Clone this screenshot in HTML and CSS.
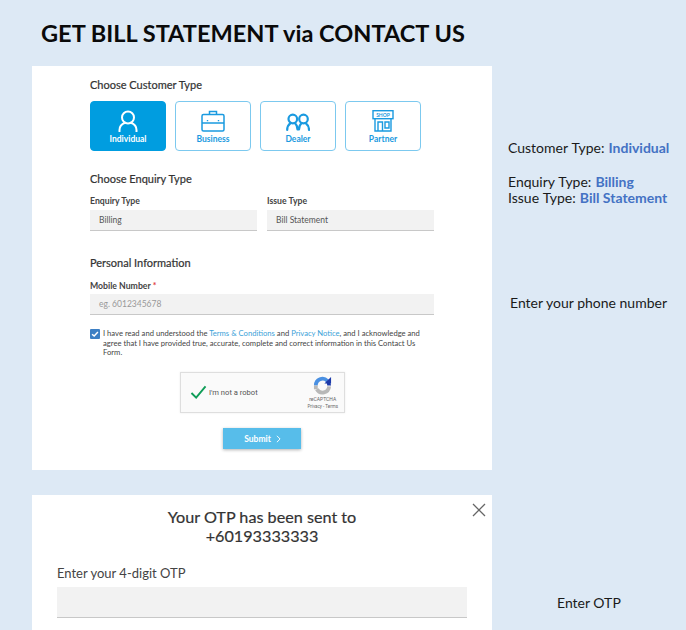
FILE: index.html
```
<!DOCTYPE html>
<html lang="en">
<head>
<meta charset="utf-8">
<title>Get Bill Statement via Contact Us</title>
<link rel="stylesheet" href="styles.css">
</head>
<body>
<h1 class="page-title">GET BILL STATEMENT via CONTACT US</h1>
<div class="layout">
  <div class="cards">
    <section class="card form-card">
      <h2 class="section-title">Choose Customer Type</h2>
      <div class="tiles">
        <div class="tile tile-active">
          <svg class="tile-icon" viewBox="0 0 24 22" fill="none" stroke="currentColor" stroke-width="2"><circle cx="12" cy="7.500" r="6"/><path d="M3.500 21.500v-1.500c0-3.500 2.500-6 5.500-7.200M20.500 21.500v-1.500c0-3.500-2.500-6-5.500-7.200" stroke-linecap="round"/></svg>
          <span>Individual</span>
        </div>
        <div class="tile">
          <svg class="tile-icon" viewBox="0 0 24 22" fill="none" stroke="currentColor" stroke-width="1.500"><rect x="1" y="4.500" width="22" height="16.500" rx="1.500"/><path d="M8.500 4.500V1.500h7v3M1 13h22"/><path d="M6.500 10v1.200M17.500 10v1.200" stroke-width="1.400"/></svg>
          <span>Business</span>
        </div>
        <div class="tile">
          <svg class="tile-icon" viewBox="0 0 24 22" fill="none" stroke="currentColor" stroke-width="2.200"><circle cx="6.800" cy="9" r="4.300"/><circle cx="17.500" cy="9" r="4.300"/><path d="M1.200 20c0-3.200 1.200-5.200 3.300-6.800M11.500 19.500c0-2.600-.8-4.800-2.500-6.300M13 19.500c0-2.600.8-4.800 2.500-6.300M23 20c0-3.200-1.200-5.200-3.300-6.800" stroke-linecap="round"/></svg>
          <span>Dealer</span>
        </div>
        <div class="tile">
          <svg class="tile-icon" viewBox="0 0 24 22" fill="none" stroke="currentColor" stroke-width="1.400"><rect x="2" y=".7" width="20" height="8"/><path d="M4 8.700V21h16V8.700M7 21V12h4.500v9M14 12h4v6h-4z"/><text class="shop-text" x="12" y="6.800" text-anchor="middle">SHOP</text></svg>
          <span>Partner</span>
        </div>
      </div>

      <h2 class="section-title enquiry-title">Choose Enquiry Type</h2>
      <div class="field-row">
        <div class="field">
          <label class="field-label">Enquiry Type</label>
          <div class="input">Billing</div>
        </div>
        <div class="field">
          <label class="field-label">Issue Type</label>
          <div class="input">Bill Statement</div>
        </div>
      </div>

      <h2 class="section-title personal-title">Personal Information</h2>
      <label class="field-label mobile-label">Mobile Number <span class="required">*</span></label>
      <div class="input input-placeholder">eg. 6012345678</div>

      <div class="consent">
        <span class="checkbox">
          <svg viewBox="0 0 12 12" fill="none" stroke="#fff" stroke-width="1.700"><path d="M2.500 6.200 5 8.500l4.500-5"/></svg>
        </span>
        <p>I have read and understood the <a>Terms &amp; Conditions</a> and <a>Privacy Notice</a>, and I acknowledge and agree that I have provided true, accurate, complete and correct information in this Contact Us Form.</p>
      </div>

      <div class="captcha">
        <svg class="captcha-check" viewBox="0 0 18 16" fill="none" stroke="#0f9d58" stroke-width="2"><path d="M1.500 8.500 6.500 13.500 16.500 1.500"/></svg>
        <span class="captcha-text">I'm not a robot</span>
        <div class="captcha-brand">
          <svg viewBox="0 0 20 20" class="captcha-logo" fill="none" stroke-width="4"><path d="M3 10a7 7 0 0 1 12-5" stroke="#4a90e2"/><path d="M15 5a7 7 0 0 1 2 5" stroke="#1c3aa9"/><path d="M17 11a7 7 0 0 1-13 3" stroke="#b8b8b8"/><path d="M3 10v4" stroke="#b8b8b8"/><path d="M12 8h7V1z" fill="#1c3aa9" stroke="none"/></svg>
          <span class="captcha-name">reCAPTCHA</span>
          <span class="captcha-links">Privacy - Terms</span>
        </div>
      </div>

      <div class="submit-wrap">
        <button class="submit" type="button">Submit
          <svg viewBox="0 0 6 10" fill="none" stroke="#fff" stroke-width="1.200"><path d="M1 1l4 4-4 4"/></svg>
        </button>
      </div>
    </section>

    <section class="card otp-card">
      <svg class="close" viewBox="0 0 14 14" fill="none" stroke="#666" stroke-width="1.300"><path d="M1 1l12 12M13 1L1 13"/></svg>
      <h2 class="otp-title">Your OTP has been sent to<br>+60193333333</h2>
      <label class="otp-label">Enter your 4-digit OTP</label>
      <div class="otp-input"></div>
    </section>
  </div>

  <aside class="notes">
    <p class="note note-customer">Customer Type: <b>Individual</b></p>
    <p class="note note-enquiry">Enquiry Type: <b>Billing</b><br>Issue Type: <b>Bill Statement</b></p>
    <p class="note note-phone">Enter your phone number</p>
    <p class="note note-otp">Enter OTP</p>
  </aside>
</div>
</body>
</html>
```
FILE: styles.css
```
* { box-sizing: border-box; }
html, body { height: 630px; overflow: hidden; }
body {
  margin: 0;
  background: #dde9f5;
  font-family: Lato, "Open Sans", sans-serif;
  color: #333;
}
.page-title {
  margin: 0;
  padding: 17px 0 0 41px;
  height: 66px;
  font-size: 23.550px;
  line-height: 32px;
  font-weight: 700;
  color: #0a0a0a;
}
.layout { display: flex; }
.cards { width: 460px; margin-left: 32px; flex: none; }
.card { background: #fff; }
.form-card { height: 404px; padding: 11px 58px 0; }
.section-title {
  margin: 0;
  font-size: 11px;
  line-height: 15px;
  font-weight: 400;
  color: #333;
  -webkit-text-stroke: .2px #333;
}
.tiles { display: flex; gap: 9px; margin-top: 9px; }
.tile {
  width: 76px;
  height: 50px;
  border: 1px solid #7cc9ef;
  border-radius: 4px;
  color: #1a9ae0;
  display: flex;
  flex-direction: column;
  align-items: center;
  font-size: 8.500px;
  font-weight: 700;
  padding-top: 8px;
}
.tile span { line-height: 11px; margin-top: 2px; }
.tile-active { background: #009de0; border-color: #009de0; color: #fff; }
.tile-icon { width: 24px; height: 22px; }
.shop-text {
  font-family: Lato, sans-serif;
  font-size: 5px;
  font-weight: 700;
  fill: currentColor;
  stroke: none;
}
.enquiry-title { margin-top: 20px; }
.field-row { display: flex; gap: 10px; margin-top: 9px; }
.field { width: 167px; }
.field-label {
  display: block;
  font-size: 8.700px;
  line-height: 12px;
  font-weight: 700;
  color: #444;
}
.input {
  height: 21px;
  margin-top: 3px;
  background: #f2f2f2;
  border-bottom: 1px solid #c8c8c8;
  padding-left: 9px;
  font-size: 8.500px;
  line-height: 20px;
  color: #555;
}
.personal-title { margin-top: 24px; }
.mobile-label { margin-top: 10px; }
.required { color: #e04040; }
.input-placeholder { color: #999; margin-top: 2px; }
.consent { display: flex; margin-top: 14px; width: 334px; gap: 3px; }
.checkbox {
  flex: none;
  width: 10px;
  height: 10px;
  background: #3c7fc4;
  border-radius: 1px;
}
.checkbox svg { display: block; width: 10px; height: 10px; }
.consent p {
  margin: 0;
  font-size: 7.650px;
  line-height: 9.700px;
  color: #444;
}
.consent a { color: #3b9fd8; }
.captcha {
  display: flex;
  align-items: center;
  width: 165px;
  height: 41px;
  margin: 14px 0 0 90px;
  background: #fafafa;
  border: 1px solid #dedede;
  box-shadow: 0 0 2px rgba(0,0,0,.08);
  padding: 0 6px 0 9px;
}
.captcha-check { width: 17px; height: 15px; flex: none; }
.captcha-text { font-family: Roboto, sans-serif; font-size: 7.600px; color: #555; margin-left: 2px; }
.captcha-brand { margin-left: auto; display: flex; flex-direction: column; align-items: center; }
.captcha-logo { width: 19px; height: 19px; }
.captcha-name { font-family: Roboto, sans-serif; font-size: 5px; line-height: 7px; color: #666; margin-top: 1px; }
.captcha-links { font-family: Roboto, sans-serif; font-size: 4.500px; line-height: 7px; color: #666; }
.submit-wrap { display: flex; margin: 15px 0 0 133px; }
.submit {
  display: flex;
  align-items: center;
  justify-content: center;
  gap: 5px;
  width: 78px;
  height: 21px;
  border: 0;
  padding: 0 0 0 1px;
  background: #57bdea;
  box-shadow: 0 1px 3px rgba(0,0,0,.3);
  color: #fff;
  font-family: Lato, sans-serif;
  font-size: 8.500px;
  font-weight: 700;
}
.submit svg { width: 5px; height: 8px; }
.otp-card { position: relative; height: 135px; margin-top: 25px; padding: 12px 25px 0; }
.close { position: absolute; top: 8px; right: 6px; width: 14px; height: 14px; }
.otp-title {
  margin: 0;
  text-align: center;
  font-size: 16.200px;
  line-height: 19px;
  font-weight: 400;
  color: #333;
  -webkit-text-stroke: .2px #333;
}
.otp-label {
  display: block;
  margin-top: 20px;
  font-size: 13px;
  line-height: 16px;
  font-weight: 400;
  color: #444;
}
.otp-input {
  height: 31px;
  margin-top: 6px;
  background: #f2f2f2;
  border-bottom: 1px solid #c8c8c8;
}
.notes { flex: 1; padding-left: 16px; }
.note { margin: 0; font-size: 14px; line-height: 16px; color: #1a1a1a; }
.note b { color: #4472c4; font-weight: 700; word-spacing: 0; }
.note-customer { margin-top: 74px; word-spacing: .5px; }
.note-enquiry { margin-top: 18px; word-spacing: .5px; }
.note-phone { margin-top: 89px; margin-left: 2px; }
.note-otp { margin-top: 284px; margin-left: 49px; }
```
